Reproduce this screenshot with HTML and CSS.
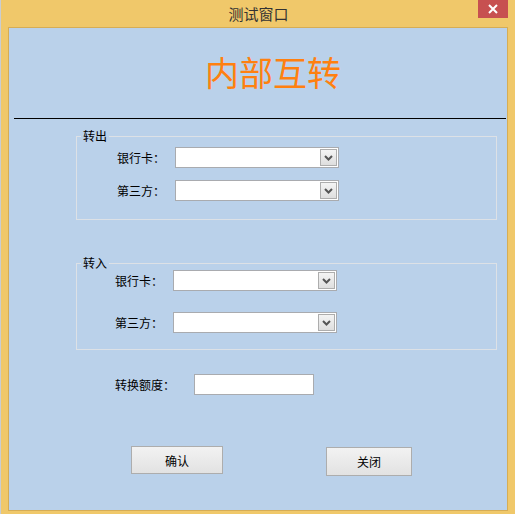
FILE: index.html
```html
<!DOCTYPE html>
<html lang="zh-CN">
<head>
    <meta charset="UTF-8">
    <title>测试窗口</title>
    <link rel="stylesheet" href="styles.css">
</head>
<body>
    <div class="window">
        <div class="titlebar">
            <span class="caption">测试窗口</span>
            <button class="close-btn" aria-label="关闭">
                <svg width="10" height="10" viewBox="0 0 10 10"><path d="M1 1 L9 9 M9 1 L1 9" stroke="#fff" stroke-width="2"/></svg>
            </button>
        </div>

        <div class="panel">
            <h1 class="heading">内部互转</h1>
            <div class="rule"></div>

            <fieldset class="group group-out">
                <legend>转出</legend>
                <div class="row first">
                    <span class="label">银行卡：</span>
                    <div class="combo"><span class="drop"><svg width="9" height="6" viewBox="0 0 9 6"><path d="M1 1 L4.5 4.5 L8 1" fill="none" stroke="#555" stroke-width="2"/></svg></span></div>
                </div>
                <div class="row second">
                    <span class="label">第三方：</span>
                    <div class="combo"><span class="drop"><svg width="9" height="6" viewBox="0 0 9 6"><path d="M1 1 L4.5 4.5 L8 1" fill="none" stroke="#555" stroke-width="2"/></svg></span></div>
                </div>
            </fieldset>

            <fieldset class="group group-in">
                <legend>转入</legend>
                <div class="row first">
                    <span class="label">银行卡：</span>
                    <div class="combo"><span class="drop"><svg width="9" height="6" viewBox="0 0 9 6"><path d="M1 1 L4.5 4.5 L8 1" fill="none" stroke="#555" stroke-width="2"/></svg></span></div>
                </div>
                <div class="row second">
                    <span class="label">第三方：</span>
                    <div class="combo"><span class="drop"><svg width="9" height="6" viewBox="0 0 9 6"><path d="M1 1 L4.5 4.5 L8 1" fill="none" stroke="#555" stroke-width="2"/></svg></span></div>
                </div>
            </fieldset>

            <div class="row amount">
                <span class="label">转换额度：</span>
                <input class="textbox" type="text">
            </div>

            <div class="actions">
                <button class="btn btn-ok">确认</button>
                <button class="btn btn-close">关闭</button>
            </div>
        </div>
    </div>
</body>
</html>
```

FILE: styles.css
```css
body {
    margin: 0;
    font-family: "Noto Sans CJK SC", "Liberation Sans", sans-serif;
    font-size: 12px;
    color: #000;
}

.window {
    width: 515px;
    height: 514px;
    background: #f0c86a;
    border-left: 1px solid #c9cdd2;
    box-sizing: border-box;
    overflow: hidden;
}

.titlebar {
    height: 27px;
    display: flex;
    justify-content: center;
    align-items: center;
    position: relative;
}

.caption {
    font-size: 15px;
    color: #333;
    margin-left: 1px;
    margin-top: -1px;
}

.close-btn {
    position: absolute;
    top: 0;
    right: 7px;
    width: 30px;
    height: 18px;
    border: none;
    padding: 0;
    background: #c75050;
    display: flex;
    align-items: center;
    justify-content: center;
}

.panel {
    margin-left: 7px;
    width: 500px;
    height: 484px;
    box-sizing: border-box;
    background: #bad1ea;
    border: 1px solid #d6ad55;
}

.heading {
    margin: 27px 0 0 196px;
    font-size: 34px;
    line-height: 34px;
    font-weight: normal;
    color: #ff8010;
}

.rule {
    height: 1px;
    background: #000;
    margin: 29px 1px 0 5px;
}

.group {
    margin: 10px 0 0 67px;
    width: 421px;
    padding: 0;
    border: 1px solid #dde1e6;
    box-sizing: border-box;
}

.group legend {
    margin-left: 4px;
    padding: 0 2px;
    line-height: 14px;
}

.row {
    display: flex;
    align-items: center;
}

.label {
    width: 58px;
}

.combo {
    position: relative;
    width: 164px;
    height: 21px;
    box-sizing: border-box;
    background: #fff;
    border: 1px solid #a9abaf;
}

.drop {
    position: absolute;
    top: 1px;
    right: 1px;
    width: 17px;
    height: 17px;
    box-sizing: border-box;
    border: 1px solid #adadad;
    background: linear-gradient(#f4f4f4, #dedede);
    display: flex;
    align-items: center;
    justify-content: center;
}

.group-out {
    height: 91px;
}

.group-out .row {
    margin-left: 40px;
}

.group-out .first {
    margin-top: 4px;
}

.group-out .second {
    margin-top: 12px;
}

.group-in {
    margin-top: 36px;
    height: 94px;
}

.group-in .row {
    margin-left: 38px;
}

.group-in .first {
    margin-top: 0;
}

.group-in .second {
    margin-top: 21px;
}

.amount {
    margin: 24px 0 0 106px;
}

.amount .label {
    width: 79px;
}

.textbox {
    width: 120px;
    height: 21px;
    box-sizing: border-box;
    border: 1px solid #a9abaf;
    padding: 0;
    background: #fff;
}

.actions {
    display: flex;
    align-items: flex-start;
    margin: 51px 0 0 122px;
}

.btn {
    font-family: inherit;
    font-size: 12px;
    color: #000;
    padding: 0;
    border: 1px solid #adadad;
    background: linear-gradient(#f2f2f2, #e2e2e2);
}

.btn-ok {
    width: 92px;
    height: 28px;
}

.btn-close {
    width: 86px;
    height: 29px;
    margin: 1px 0 0 103px;
}
```
